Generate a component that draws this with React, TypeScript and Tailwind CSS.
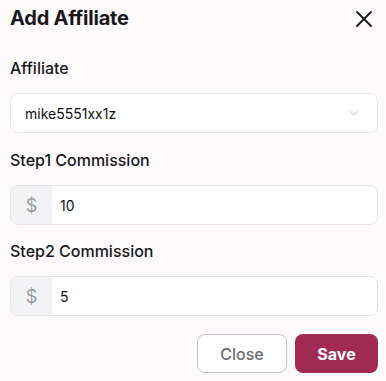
import React from "react";

function DollarInput({ value }: { value: string }) {
  return (
    <div className="flex h-10 rounded-lg border border-[#e4e4e7] bg-white overflow-hidden">
      <div className="w-[41px] flex items-center justify-center bg-[#f3f3f5] text-[#9a9aa3] text-[18px]">
        $
      </div>
      <div className="flex items-center pl-2 text-[14px] text-[#111]">{value}</div>
    </div>
  );
}

export default function App() {
  return (
    <div
      className="w-[386px] h-[381px] bg-[#fdfafb] pl-[10px] pr-[8px] pt-[4px]"
      style={{ fontFamily: "Inter, 'Noto Sans', sans-serif" }}
    >
      <div className="flex items-center justify-between h-[28px]">
        <h1 className="text-[20px] leading-[28px] font-bold text-[#18181b] tracking-[-0.2px]">Add Affiliate</h1>
        <svg width="16" height="16" viewBox="0 0 16 16" className="mr-[6px] mt-[2px]">
          <path d="M1 1L15 15M15 1L1 15" stroke="#18181b" strokeWidth="1.8" strokeLinecap="round" />
        </svg>
      </div>

      <div className="mt-[24px] text-[16px] font-medium text-[#18181b] leading-[24px]">Affiliate</div>
      <div className="mt-[13px] flex h-10 items-center justify-between rounded-lg border border-[#e9e6e8] bg-white pl-[14px] pr-[18px]">
        <span className="text-[14px] text-[#111]">mike5551xx1z</span>
        <svg width="10" height="6" viewBox="0 0 10 6">
          <path d="M1 1L5 5L9 1" stroke="#c4c4ca" strokeWidth="1" fill="none" />
        </svg>
      </div>

      <div className="mt-[15px] text-[16px] font-medium text-[#18181b] leading-[24px]">Step1 Commission</div>
      <div className="mt-[13px]">
        <DollarInput value="10" />
      </div>

      <div className="mt-[14px] text-[16px] font-medium text-[#18181b] leading-[24px]">Step2 Commission</div>
      <div className="mt-[13px]">
        <DollarInput value="5" />
      </div>

      <div className="mt-[18px] flex justify-end gap-[8px]">
        <button className="h-[39px] w-[90px] rounded-lg border border-[#c4c2c5] bg-white text-[16px] font-medium text-[#6b6b73]">
          Close
        </button>
        <button className="h-[39px] w-[83px] rounded-lg bg-[#a02a52] text-[16px] font-bold text-white">
          Save
        </button>
      </div>
    </div>
  );
}
